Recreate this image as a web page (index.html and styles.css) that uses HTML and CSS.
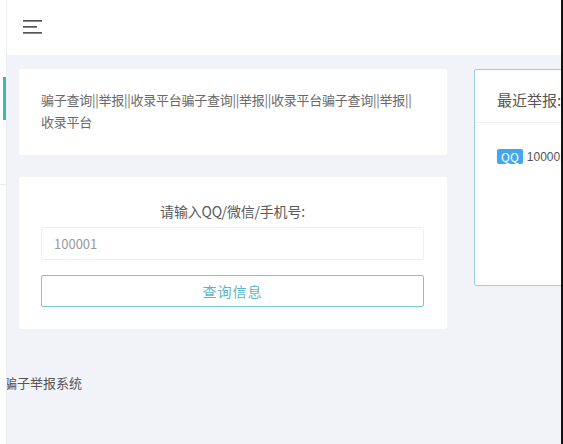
FILE: index.html
```html
<!DOCTYPE html>
<html lang="zh">
<head>
<meta charset="utf-8">
<title>骗子举报系统</title>
<link rel="stylesheet" href="styles.css">
</head>
<body>
<div class="page">
  <aside class="sidebar"><span class="sidebar-active"></span><span class="sidebar-line"></span></aside>
  <div class="main">
    <header class="topbar">
      <svg class="menu-icon" width="20" height="14" viewBox="0 0 20 14">
        <rect x="0" y="0" width="19" height="1.7" fill="#555"/>
        <rect x="0" y="6" width="14" height="1.7" fill="#555"/>
        <rect x="0" y="12" width="19" height="1.7" fill="#555"/>
      </svg>
    </header>
    <div class="content">
      <div class="left-col">
        <section class="card intro">骗子查询||举报||收录平台骗子查询||举报||收录平台骗子查询||举报||收录平台</section>
        <section class="card search">
          <div class="search-label">请输入QQ/微信/手机号:</div>
          <input class="search-input" type="text" placeholder="100001">
          <button class="search-btn" type="button">查询信息</button>
        </section>
      </div>
      <section class="recent">
        <div class="recent-title">最近举报:</div>
        <div class="recent-list">
          <div class="recent-item"><span class="badge">QQ</span><span class="recent-num">100001</span></div>
        </div>
      </section>
    </div>
    <footer class="footer">骗子举报系统</footer>
  </div>
  <div class="edge"></div>
</div>
</body>
</html>
```
FILE: styles.css
```css
html, body {
  margin: 0;
  padding: 0;
}
body {
  width: 563px;
  height: 444px;
  overflow: hidden;
  font-family: "Noto Sans CJK SC", "Microsoft YaHei", "Liberation Sans", sans-serif;
  background: #f2f3f8;
}
.page {
  display: flex;
  width: 563px;
  height: 444px;
  position: relative;
}
.sidebar {
  position: absolute;
  left: 0;
  top: 0;
  width: 6px;
  height: 444px;
  background: #fff;
  border-right: 1px solid #eceef3;
  z-index: 2;
}
.sidebar-active {
  position: absolute;
  left: 3px;
  top: 77px;
  width: 3px;
  height: 43px;
  background: #3fb8ad;
}
.sidebar-line {
  position: absolute;
  left: 0;
  top: 184px;
  width: 6px;
  height: 1px;
  background: #e6e8ee;
}
.main {
  flex: 1;
  min-width: 0;
  display: flex;
  flex-direction: column;
  background: #f2f3f8;
  overflow: hidden;
}
.topbar {
  height: 55px;
  background: #fff;
  display: flex;
  align-items: center;
  padding-left: 23px;
  flex-shrink: 0;
}
.menu-icon {
  display: block;
  margin-top: -2px;
}
.content {
  display: flex;
  align-items: flex-start;
  padding: 14px 0 0 19px;
  gap: 27px;
}
.left-col {
  width: 428px;
  flex-shrink: 0;
  display: flex;
  flex-direction: column;
  gap: 22px;
}
.card {
  background: #fff;
  border-radius: 2px;
  box-sizing: border-box;
}
.intro {
  padding: 20px 30px 22px 22px;
  font-size: 13px;
  line-height: 22px;
  color: #6a6a6a;
  letter-spacing: -0.25px;
  height: 86px;
}
.search {
  height: 152px;
  padding: 24px 23px 0 22px;
  display: flex;
  flex-direction: column;
}
.search-label {
  text-align: center;
  font-size: 14px;
  line-height: 20px;
  color: #5a5a5a;
  letter-spacing: -0.2px;
  margin-bottom: 6px;
}
.search-input {
  box-sizing: border-box;
  width: 383px;
  height: 33px;
  border: 1px solid #eeeff2;
  border-radius: 2px;
  padding: 0 12px;
  font-family: inherit;
  font-size: 13px;
  color: #555;
  outline: none;
  background: #fff;
}
.search-input::placeholder {
  color: #999;
}
.search-btn {
  box-sizing: border-box;
  width: 383px;
  height: 32px;
  margin-top: 15px;
  border: 1px solid #78c6d3;
  border-radius: 2px;
  background: #fff;
  font-family: inherit;
  font-size: 14px;
  color: #5db4cb;
  letter-spacing: 1px;
}
.recent {
  box-sizing: border-box;
  width: 140px;
  height: 217px;
  flex-shrink: 0;
  background: #fff;
  border: 1px solid #9dcfdc;
  border-radius: 2px;
}
.recent-title {
  height: 53px;
  box-sizing: border-box;
  padding: 19px 0 0 22px;
  font-size: 15px;
  line-height: 22px;
  color: #555;
  border-bottom: 1px solid #f0f1f4;
  margin: 0 4px 0 0;
}
.recent-list {
  padding: 26px 0 0 22px;
}
.recent-item {
  display: flex;
  align-items: center;
  white-space: nowrap;
}
.badge {
  display: inline-block;
  background: #43a7ec;
  color: #fff;
  font-size: 12px;
  line-height: 15px;
  padding: 0 4px;
  border-radius: 2px;
}
.recent-num {
  font-size: 12px;
  color: #555;
  margin-left: 4px;
  font-family: "Liberation Sans", "Noto Sans CJK SC", sans-serif;
}
.footer {
  margin-top: 44px;
  padding-left: 4px;
  font-size: 13px;
  line-height: 20px;
  color: #555;
}
.edge {
  width: 2px;
  height: 444px;
  background: #111;
  flex-shrink: 0;
}
```
